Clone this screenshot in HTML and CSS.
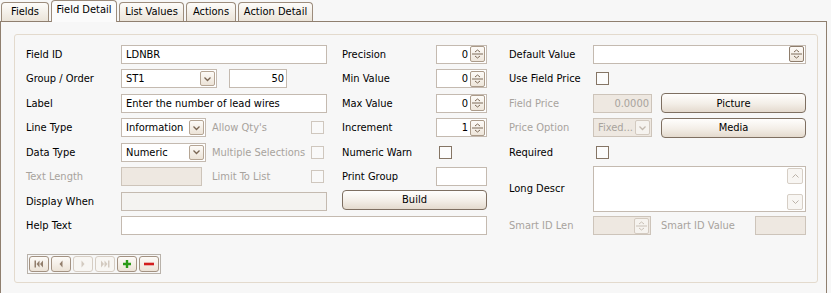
FILE: index.html
```html
<!DOCTYPE html>
<html lang="en">
<head>
    <meta charset="UTF-8">
    <title>Field Detail</title>
    <link rel="stylesheet" href="styles.css">
</head>
<body>
    <div class="tabs">
        <div class="tab t-fields">Fields</div>
        <div class="tab t-detail active">Field Detail</div>
        <div class="tab t-list">List Values</div>
        <div class="tab t-actions">Actions</div>
        <div class="tab t-adetail">Action Detail</div>
    </div>

    <div class="pane">
        <div class="panel">
            <div class="form">
                <!-- row 1 -->
                <div class="lbl">Field ID</div>
                <div class="field">LDNBR</div>
                <div class="lbl mid">Precision</div>
                <div class="field spin"><span class="val">0</span><span class="spin-btn"><svg width="13" height="14" viewBox="0 0 13 14"><path d="M4 5 L6.5 3 L9 5"/><path d="M1 7 H12"/><path d="M4 9 L6.5 11 L9 9"/></svg></span></div>
                <div class="lbl side">Default Value</div>
                <div class="field spin"><span class="val"></span><span class="spin-btn dark"><svg width="13" height="14" viewBox="0 0 13 14"><path d="M4 5 L6.5 3 L9 5"/><path d="M1 7 H12"/><path d="M4 9 L6.5 11 L9 9"/></svg></span></div>

                <!-- row 2 -->
                <div class="lbl">Group / Order</div>
                <div class="group">
                    <div class="field select w95"><span>ST1</span><span class="drop"><svg width="9" height="6" viewBox="0 0 9 6"><path d="M1.5 1.5 L4.5 4.5 L7.5 1.5"/></svg></span></div>
                    <div class="field num w57">50</div>
                </div>
                <div class="lbl mid">Min Value</div>
                <div class="field spin"><span class="val">0</span><span class="spin-btn"><svg width="13" height="14" viewBox="0 0 13 14"><path d="M4 5 L6.5 3 L9 5"/><path d="M1 7 H12"/><path d="M4 9 L6.5 11 L9 9"/></svg></span></div>
                <div class="lbl side">Use Field Price</div>
                <div><span class="check"></span></div>

                <!-- row 3 -->
                <div class="lbl">Label</div>
                <div class="field">Enter the number of lead wires</div>
                <div class="lbl mid">Max Value</div>
                <div class="field spin"><span class="val">0</span><span class="spin-btn"><svg width="13" height="14" viewBox="0 0 13 14"><path d="M4 5 L6.5 3 L9 5"/><path d="M1 7 H12"/><path d="M4 9 L6.5 11 L9 9"/></svg></span></div>
                <div class="lbl side off">Field Price</div>
                <div class="with-btn">
                    <div class="field num off w58">0.0000</div>
                    <div class="btn">Picture</div>
                </div>

                <!-- row 4 -->
                <div class="lbl">Line Type</div>
                <div class="pair">
                    <div class="field select w84"><span>Information</span><span class="drop"><svg width="9" height="6" viewBox="0 0 9 6"><path d="M1.5 1.5 L4.5 4.5 L7.5 1.5"/></svg></span></div>
                    <span class="lbl off">Allow Qty's</span>
                    <span class="check off"></span>
                </div>
                <div class="lbl mid">Increment</div>
                <div class="field spin"><span class="val">1</span><span class="spin-btn"><svg width="13" height="14" viewBox="0 0 13 14"><path d="M4 5 L6.5 3 L9 5"/><path d="M1 7 H12"/><path d="M4 9 L6.5 11 L9 9"/></svg></span></div>
                <div class="lbl side off">Price Option</div>
                <div class="with-btn">
                    <div class="field select off w58"><span>Fixed...</span><span class="drop off"><svg width="9" height="6" viewBox="0 0 9 6"><path d="M1.5 1.5 L4.5 4.5 L7.5 1.5"/></svg></span></div>
                    <div class="btn">Media</div>
                </div>

                <!-- row 5 -->
                <div class="lbl">Data Type</div>
                <div class="pair">
                    <div class="field select w84"><span>Numeric</span><span class="drop"><svg width="9" height="6" viewBox="0 0 9 6"><path d="M1.5 1.5 L4.5 4.5 L7.5 1.5"/></svg></span></div>
                    <span class="lbl off">Multiple Selections</span>
                    <span class="check off"></span>
                </div>
                <div class="lbl mid">Numeric Warn</div>
                <div><span class="check"></span></div>
                <div class="lbl side">Required</div>
                <div><span class="check"></span></div>

                <!-- row 6 -->
                <div class="lbl off">Text Length</div>
                <div class="pair">
                    <div class="field off w80"></div>
                    <span class="lbl off">Limit To List</span>
                    <span class="check off"></span>
                </div>
                <div class="lbl mid">Print Group</div>
                <div class="field"></div>
                <div class="lbl side tall">Long Descr</div>
                <div class="memo tall">
                    <div class="vscroll">
                        <span class="sb-btn"><svg width="9" height="6" viewBox="0 0 9 6"><path d="M1.5 4.5 L4.5 1.5 L7.5 4.5"/></svg></span>
                        <span class="sb-btn"><svg width="9" height="6" viewBox="0 0 9 6"><path d="M1.5 1.5 L4.5 4.5 L7.5 1.5"/></svg></span>
                    </div>
                </div>

                <!-- row 7 -->
                <div class="lbl">Display When</div>
                <div class="field ro"></div>
                <div class="btn build">Build</div>

                <!-- row 8 -->
                <div class="lbl">Help Text</div>
                <div class="field help"></div>
                <div class="lbl side off">Smart ID Len</div>
                <div class="smart">
                    <div class="field spin off w57"><span class="val"></span><span class="spin-btn off"><svg width="13" height="14" viewBox="0 0 13 14"><path d="M4 5 L6.5 3 L9 5"/><path d="M1 7 H12"/><path d="M4 9 L6.5 11 L9 9"/></svg></span></div>
                    <span class="lbl off smart-lbl">Smart ID Value</span>
                    <div class="field off w50"></div>
                </div>
            </div>

            <div class="nav">
                <span class="nav-btn"><svg width="10" height="8" viewBox="0 0 10 8"><rect x="0.5" y="0.5" width="1.5" height="7"/><path d="M5.5 0.5 L2.5 4 L5.5 7.5 Z"/><path d="M9 0.5 L6 4 L9 7.5 Z"/></svg></span>
                <span class="nav-btn"><svg width="10" height="8" viewBox="0 0 10 8"><path d="M6.5 0.5 L3.5 4 L6.5 7.5 Z"/></svg></span>
                <span class="nav-btn off"><svg width="10" height="8" viewBox="0 0 10 8"><path d="M3.5 0.5 L6.5 4 L3.5 7.5 Z"/></svg></span>
                <span class="nav-btn off"><svg width="10" height="8" viewBox="0 0 10 8"><path d="M1 0.5 L4 4 L1 7.5 Z"/><path d="M4.5 0.5 L7.5 4 L4.5 7.5 Z"/><rect x="8" y="0.5" width="1.5" height="7"/></svg></span>
                <span class="nav-btn add"><svg width="10" height="10" viewBox="0 0 10 10"><path d="M5 1 V9 M1 5 H9"/></svg></span>
                <span class="nav-btn del"><svg width="12" height="10" viewBox="0 0 12 10"><path d="M1 5 H11"/></svg></span>
            </div>
        </div>
    </div>
</body>
</html>
```

FILE: styles.css
```css
body {
    margin: 0;
    background: #f7f7f7;
    font-family: 'DejaVu Sans Condensed', 'DejaVu Sans', sans-serif;
    font-size: 11px;
    color: #000;
}

/* tab strip */
.tabs {
    display: flex;
    align-items: flex-end;
    gap: 2px;
    height: 21px;
    padding-left: 1px;
    position: relative;
    z-index: 1;
}

.tab {
    height: 19px;
    box-sizing: border-box;
    text-align: center;
    line-height: 18px;
    white-space: nowrap;
    border: 1px solid #9c8c7c;
    border-bottom: none;
    border-radius: 4px 4px 0 0;
    background: linear-gradient(#fdfcfa, #ebe4d9);
}

.tab.active {
    height: 22px;
    margin-bottom: -1px;
    line-height: 18px;
    background: #fbfbfb;
}

.t-fields { width: 48px; }
.t-detail { width: 66px; }
.t-list { width: 65px; }
.t-actions { width: 50px; }
.t-adetail { width: 75px; }

/* tab page */
.pane {
    width: 827px;
    height: 272px;
    box-sizing: border-box;
    border: 1px solid #8f7f6f;
    border-bottom: none;
    padding: 12px 0 0 13px;
    background: #f7f7f7;
}

.panel {
    width: 804px;
    box-sizing: border-box;
    border: 1px solid #e3dacd;
    border-radius: 3px;
    padding: 7px 11px 8px;
}

.form {
    display: grid;
    grid-template-columns: 95px 206px 109px 51px 106px 213px;
    grid-template-rows: 24px 25px 24px 25px 24px 25px 24px 25px;
    align-items: center;
}

.lbl {
    white-space: nowrap;
}

.lbl.mid {
    padding-left: 15px;
}

.lbl.side {
    padding-left: 22px;
}

.off {
    color: #a8a39d;
}

.tall {
    grid-row: span 2;
}

/* inputs */
.field {
    height: 19px;
    box-sizing: border-box;
    border: 1px solid #c4bab0;
    background: #fff;
    padding: 0 4px;
    line-height: 17px;
    white-space: nowrap;
    overflow: hidden;
}

.field.num {
    text-align: right;
    padding-right: 2px;
}

.field.off {
    background: #eee8e1;
    border-color: #cdc4ba;
}

.field.ro {
    background: #f4f3f1;
}

.field.help {
    grid-column: span 3;
}

.w95 { width: 96px; }
.w84 { width: 85px; }
.w80 { width: 81px; }
.w58 { width: 59px; }
.w57 { width: 58px; }
.w50 { width: 51px; }

.select {
    display: flex;
    align-items: center;
    justify-content: space-between;
    padding: 0 1px 0 4px;
}

.drop {
    width: 15px;
    height: 15px;
    box-sizing: border-box;
    border: 1px solid #b5a594;
    border-radius: 2px;
    background: linear-gradient(#fdfbf8, #ece3d7);
    display: flex;
    align-items: center;
    justify-content: center;
}

.drop svg path {
    fill: none;
    stroke: #7a6653;
    stroke-width: 1.3;
}

.drop.off {
    border-color: #d3cac0;
    background: #f6f3ef;
}

.drop.off svg path {
    stroke: #c3b9ae;
}

.spin {
    display: flex;
    align-items: center;
    justify-content: space-between;
    padding: 0 1px 0 4px;
}

.spin .val {
    flex: 1;
    text-align: right;
    padding-right: 2px;
}

.spin-btn {
    width: 15px;
    height: 16px;
    box-sizing: border-box;
    border: 1px solid #ab9b8a;
    border-radius: 2px;
    background: linear-gradient(#fdfbf8, #eee6db);
    display: flex;
    align-items: center;
    justify-content: center;
}

.spin-btn.dark {
    border-color: #8e7d6c;
}

.spin-btn svg path {
    fill: none;
    stroke: #7d6a58;
    stroke-width: 1;
}

.spin-btn.off {
    border-color: #d3cac0;
    background: #f6f3ef;
}

.spin-btn.off svg path {
    stroke: #c9c0b6;
}

.check {
    display: block;
    width: 13px;
    height: 13px;
    box-sizing: border-box;
    border: 1px solid #857565;
    background: #fcfcfc;
    margin-left: 3px;
}

.check.off {
    border-color: #cfc7be;
    background: #f9f9f9;
}

/* left column combos */
.group {
    display: flex;
    gap: 12px;
}

.pair {
    display: grid;
    grid-template-columns: 91px 1fr 13px;
    align-items: center;
    padding-right: 3px;
}

.pair .check {
    margin-left: 0;
}

/* right column */
.with-btn {
    display: flex;
    align-items: center;
    gap: 9px;
}

.btn {
    height: 20px;
    box-sizing: border-box;
    border: 1px solid #7e6f61;
    border-radius: 4px;
    background: linear-gradient(#fffefd, #f3eee7 55%, #e4dace);
    display: flex;
    align-items: center;
    justify-content: center;
}

.with-btn .btn {
    width: 145px;
}

.btn.build {
    grid-column: span 2;
    margin-left: 15px;
    margin-top: -3px;
}

.memo {
    height: 46px;
    box-sizing: border-box;
    border: 1px solid #c4bab0;
    background: #fff;
    display: flex;
    justify-content: flex-end;
}

.vscroll {
    width: 17px;
    display: flex;
    flex-direction: column;
    justify-content: space-between;
    padding: 1px;
}

.sb-btn {
    width: 16px;
    height: 16px;
    box-sizing: border-box;
    border: 1px solid #d6cec5;
    border-radius: 2px;
    background: #f8f6f3;
    display: flex;
    align-items: center;
    justify-content: center;
}

.sb-btn svg path {
    fill: none;
    stroke: #bbb2a8;
    stroke-width: 1;
}

.smart {
    display: flex;
    align-items: center;
}

.smart-lbl {
    margin-left: 10px;
}

.smart .w50 {
    margin-left: auto;
}

/* record navigator */
.nav {
    display: inline-flex;
    gap: 2px;
    margin: 16px 0 0 1px;
    padding: 1px;
    border: 1px solid #b9b2aa;
}

.nav-btn {
    width: 20px;
    height: 16px;
    box-sizing: border-box;
    border: 1px solid #a39282;
    border-radius: 3px;
    background: linear-gradient(#fdfbf8, #ece3d7);
    display: flex;
    align-items: center;
    justify-content: center;
}

.nav-btn svg {
    fill: #927e6c;
}

.nav-btn.off {
    border-color: #d6cdc3;
    background: #f8f6f3;
}

.nav-btn.off svg {
    fill: #d3cac0;
}

.nav-btn.add svg path {
    stroke: #2b9a17;
    stroke-width: 2.4;
}

.nav-btn.del svg path {
    stroke: #d31d1d;
    stroke-width: 2.6;
}
```
